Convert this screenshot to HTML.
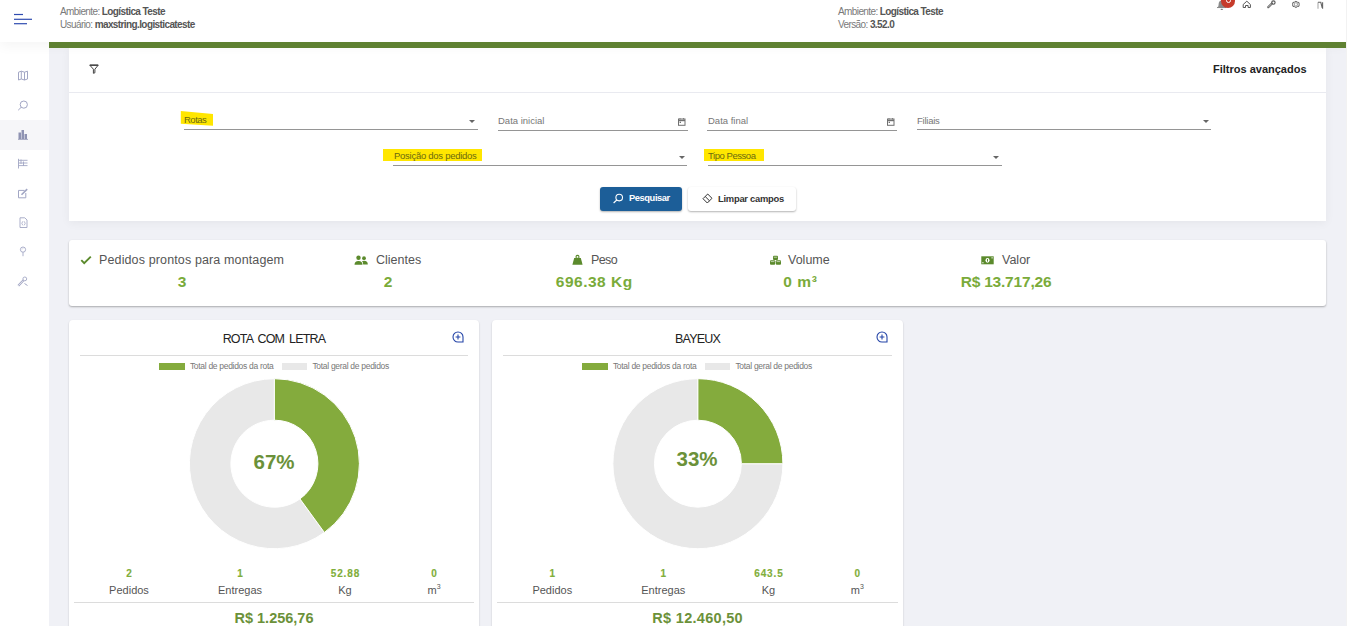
<!DOCTYPE html>
<html><head><meta charset="utf-8">
<style>
*{margin:0;padding:0;box-sizing:border-box}
html,body{width:1347px;height:626px;overflow:hidden;background:#f0f1f6;font-family:"Liberation Sans",sans-serif;position:relative}
.a{position:absolute}
#hdr{left:0;top:0;width:1346px;height:42px;background:#fff;z-index:2;box-shadow:0 4px 12px rgba(0,0,0,.045)}
#side{left:0;top:42px;width:49px;height:584px;background:#fff}
#green{left:49px;top:42px;width:1297px;height:6px;background:#5f8132;z-index:3}
.ht{font-size:10px;letter-spacing:-0.6px;color:#7a7a7a;white-space:nowrap;line-height:13px}
.ht b{color:#555;font-weight:bold}
.card{background:#fff;border-radius:3px}
.fl{font-size:9.5px;color:#777;white-space:nowrap}
.ul{height:1px;background:#959595}
.hl{background:#ffe600}
.arr{width:0;height:0;border-left:3px solid transparent;border-right:3px solid transparent;border-top:3px solid #666}
.sl{font-size:12.5px;color:#555;white-space:nowrap}
.sv{font-size:15.5px;color:#7aab3a;font-weight:bold;white-space:nowrap;text-align:center}
.g{color:#6b9139}
.ct{font-size:12.5px;letter-spacing:-0.8px;word-spacing:2.2px;color:#222;text-align:center;white-space:nowrap}
.lg{font-size:8.5px;letter-spacing:-0.3px;color:#777;white-space:nowrap}
.pc{font-size:20.5px;font-weight:bold;color:#6b9139;text-align:center}
.sn{font-size:10px;-webkit-text-stroke:0.15px #7fae3a;letter-spacing:0.9px;padding-left:0.9px;font-weight:bold;color:#7fae3a;text-align:center}
.sb{font-size:11px;color:#555;text-align:center}
.sb sup{font-size:7px;vertical-align:top;position:relative;top:-1px}
.tv{font-size:14.5px;font-weight:bold;color:#6b9139;text-align:center}
</style></head><body>
<!-- header -->
<div class="a" id="hdr">
<svg class="a" style="left:13px;top:13px" width="20" height="12"><g stroke="#2f4cb0" stroke-width="1.2"><line x1="1" y1="1.5" x2="10" y2="1.5"/><line x1="1" y1="6.3" x2="19" y2="6.3"/><line x1="1" y1="10.7" x2="14" y2="10.7"/></g></svg>
<div class="a ht" style="left:60px;top:5px">Ambiente: <b>Logística Teste</b><br>Usuário: <b>maxstring.logisticateste</b></div>
<div class="a ht" style="left:838px;top:5px">Ambiente: <b>Logística Teste</b><br>Versão: <b>3.52.0</b></div>

</div>
<div class="a" id="side"></div>
<div class="a" id="green"></div>
<!-- filter card -->
<div class="a card" style="left:69px;top:48px;width:1257px;height:173px;border-radius:0;box-shadow:0 2px 9px rgba(0,0,0,.05)"></div>
<div class="a" style="left:69px;top:92px;width:1257px;height:1px;background:#e9eaf0"></div>
<div class="a" style="left:1213px;top:63px;font-size:11px;font-weight:bold;color:#222;white-space:nowrap">Filtros avançados</div>

<!-- fields row 1 -->
<svg class="a hl2" style="left:180px;top:110px" width="35" height="18"><path d="M0.8 0.9L33 3.9V15.8L0.8 13.7Z" fill="#ffe600"/></svg>
<div class="a fl" style="left:184px;top:114px;color:#6b6a10;letter-spacing:-0.5px">Rotas</div>
<div class="a ul" style="left:184px;top:129px;width:294px"></div>
<div class="a arr" style="left:469px;top:120px"></div>

<div class="a fl" style="left:498px;top:115px">Data inicial</div>
<div class="a ul" style="left:498px;top:130px;width:190px"></div>

<div class="a fl" style="left:708px;top:115px">Data final</div>
<div class="a ul" style="left:707px;top:130px;width:190px"></div>

<div class="a fl" style="left:917px;top:115px;letter-spacing:-0.25px">Filiais</div>
<div class="a ul" style="left:917px;top:129px;width:294px"></div>
<div class="a arr" style="left:1203px;top:120px"></div>

<!-- fields row 2 -->
<div class="a hl" style="left:383px;top:149px;width:99px;height:12px"></div>
<div class="a fl" style="left:394px;top:150px;color:#6b6a10;letter-spacing:-0.27px">Posição dos pedidos</div>
<div class="a ul" style="left:393px;top:165px;width:294px"></div>
<div class="a arr" style="left:679px;top:156px"></div>

<div class="a hl" style="left:704px;top:149px;width:60px;height:12px"></div>
<div class="a fl" style="left:708px;top:150px;color:#6b6a10;letter-spacing:-0.45px">Tipo Pessoa</div>
<div class="a ul" style="left:708px;top:165px;width:294px"></div>
<div class="a arr" style="left:993px;top:156px"></div>

<!-- buttons -->
<div class="a" style="left:600px;top:187px;width:82px;height:24px;background:#1c5e98;border-radius:3px;box-shadow:0 1px 2px rgba(0,0,0,.3)"></div>
<div class="a" style="left:629px;top:193px;font-size:9.3px;letter-spacing:-0.4px;font-weight:bold;color:#fff;white-space:nowrap">Pesquisar</div>
<div class="a" style="left:688px;top:187px;width:108px;height:24px;background:#fff;border-radius:3px;box-shadow:0 1px 2px rgba(0,0,0,.3)"></div>
<div class="a" style="left:718px;top:193px;font-size:9.4px;letter-spacing:-0.25px;font-weight:bold;color:#333;white-space:nowrap">Limpar campos</div>

<!-- summary card -->
<div class="a card" style="left:69px;top:240px;width:1257px;height:66px;box-shadow:0 1px 2px rgba(0,0,0,.3)"></div>
<div class="a sl" style="left:99px;top:253px;letter-spacing:0.13px">Pedidos prontos para montagem</div>
<div class="a sv" style="left:132px;top:273px;width:100px">3</div>
<div class="a sl" style="left:376px;top:253px">Clientes</div>
<div class="a sv" style="left:338px;top:273px;width:100px">2</div>
<div class="a sl" style="left:591px;top:253px;letter-spacing:-0.6px">Peso</div>
<div class="a sv" style="left:544px;top:273px;width:100px;letter-spacing:0.5px;padding-left:0.5px">696.38 Kg</div>
<div class="a sl" style="left:788px;top:253px">Volume</div>
<div class="a sv" style="left:750px;top:273px;width:100px;letter-spacing:0.6px;padding-left:0.6px">0 m³</div>
<div class="a sl" style="left:1002px;top:253px">Valor</div>
<div class="a sv" style="left:956px;top:273px;width:100px;letter-spacing:-0.2px;padding-left:-0.2px">R$ 13.717,26</div>


<!-- header icons -->
<svg class="a" style="z-index:4;left:1215px;top:-1px" width="12" height="12" viewBox="0 0 12 12"><path d="M2.6 8.4 Q3.6 7.4 3.6 5.5 Q3.6 1.8 6.8 1.6 Q10 1.8 10 5.5 Q10 7.4 11 8.4 Z" fill="#8a8a8a"/><path d="M2 8.5H11.5" stroke="#8a8a8a" stroke-width="1.1"/><ellipse cx="6.8" cy="10.3" rx="1.3" ry="0.6" fill="#777"/></svg>
<div class="a" style="z-index:4;left:1221px;top:-6px;width:14px;height:14px;border-radius:50%;background:#c63b2b"></div>
<div class="a" style="z-index:4;left:1225.6px;top:-5px;width:5.2px;height:8px;border:1.5px solid #fff;border-radius:2.5px"></div>
<svg class="a" style="z-index:4;left:1242px;top:0px" width="10" height="10" viewBox="0 0 10 10"><path d="M1.2 7.5V4.5L4.8 1.2L8.4 4.5V7.5H6.1V5.5H3.5V7.5Z" fill="none" stroke="#555" stroke-width="1" stroke-linejoin="round"/></svg>
<svg class="a" style="z-index:4;left:1267px;top:0px" width="10" height="10" viewBox="0 0 10 10"><path d="M1.2 7.2L4.9 3.5" stroke="#555" stroke-width="2.1" stroke-linecap="round"/><path d="M1.2 7.2L4.9 3.5" stroke="#fff" stroke-width="0.7" stroke-linecap="round"/><circle cx="6.4" cy="2.6" r="1.7" fill="none" stroke="#555" stroke-width="1.1"/></svg>
<svg class="a" style="z-index:4;left:1291px;top:0px" width="10" height="10" viewBox="0 0 10 10"><path d="M4.9 1.3L6.4 2.2L7.9 2.5L8.2 4.4L7.9 6.3L6.4 6.6L4.9 7.5L3.4 6.6L1.9 6.3L1.6 4.4L1.9 2.5L3.4 2.2Z" fill="none" stroke="#555" stroke-width="0.95" stroke-linejoin="round"/><path d="M3.4 3.4L4.9 2.7L6.4 3.4V5.4L4.9 6.1L3.4 5.4Z" fill="none" stroke="#777" stroke-width="0.7"/></svg>
<svg class="a" style="z-index:4;left:1317px;top:1px" width="8" height="9" viewBox="0 0 8 9"><path d="M1 1.2V7.8" stroke="#aaa" stroke-width="1.1"/><path d="M1 1.3H3.8L5.2 6.8M5.6 1.2V7.8" fill="none" stroke="#666" stroke-width="1.1"/></svg>

<!-- sidebar icons -->
<svg class="a" style="left:17px;top:70px" width="12" height="11" viewBox="0 0 12 11"><path d="M1.5 2.2L4.3 1.2L7.5 2.2L10.5 1.2V9L7.5 10L4.3 9L1.5 10Z M4.3 1.2V9 M7.5 2.2V10" fill="none" stroke="#a2a6c4" stroke-width="1"/></svg>
<svg class="a" style="left:17px;top:100px" width="12" height="11" viewBox="0 0 12 11"><circle cx="6.8" cy="4.6" r="3.6" fill="none" stroke="#a2a6c4" stroke-width="1"/><path d="M4.2 7.3L1.2 10.2" stroke="#a2a6c4" stroke-width="1"/></svg>
<div class="a" style="left:0;top:120px;width:49px;height:30px;background:#f6f6f9"></div>
<svg class="a" style="left:17px;top:129px" width="12" height="11" viewBox="0 0 12 11"><path d="M1.5 3.5H4V10H1.5Z M4.5 1H7V10H4.5Z M7.5 5H10V10H7.5Z" fill="#8f93b3"/><path d="M1 10.4H11" stroke="#8f93b3" stroke-width="0.8"/></svg>
<svg class="a" style="left:17px;top:158px" width="12" height="11" viewBox="0 0 12 11"><path d="M1.5 0.8V10.5 M1.5 2.3H10.5 M1.5 5H10.5 M1.5 7.6H10.5 M4 1.5V6 M6.5 3.5V8" fill="none" stroke="#a2a6c4" stroke-width="0.9"/></svg>
<svg class="a" style="left:17px;top:188px" width="12" height="11" viewBox="0 0 12 11"><path d="M7.5 2.4H1.5V9.8H8.8V5" fill="none" stroke="#a2a6c4" stroke-width="1"/><path d="M4.5 6.8L10.2 1.1" stroke="#a2a6c4" stroke-width="1.6"/></svg>
<svg class="a" style="left:18px;top:217px" width="11" height="12" viewBox="0 0 11 12"><path d="M2 0.8H6.8L9 3V10.5H2Z" fill="none" stroke="#a2a6c4" stroke-width="0.9"/><path d="M4.8 4.3L3.8 6.3L4.8 8.3 M6.2 4.3L7.2 6.3L6.2 8.3" fill="none" stroke="#a2a6c4" stroke-width="0.8"/></svg>
<svg class="a" style="left:18px;top:246px" width="10" height="11" viewBox="0 0 10 11"><circle cx="5" cy="3.6" r="2.6" fill="none" stroke="#a2a6c4" stroke-width="0.9"/><path d="M5 6.2V10.2" stroke="#a2a6c4" stroke-width="0.9"/><path d="M4 3.4L5 2.4" stroke="#a2a6c4" stroke-width="0.7"/></svg>
<svg class="a" style="left:17px;top:276px" width="12" height="11" viewBox="0 0 12 11"><path d="M1.3 9.7L6.5 4.3" stroke="#a2a6c4" stroke-width="2.2"/><path d="M1.3 9.7L6.5 4.3" stroke="#fff" stroke-width="0.7"/><circle cx="7.8" cy="2.9" r="1.9" fill="none" stroke="#a2a6c4" stroke-width="0.9"/><path d="M7.5 7.5L10.5 9.5" stroke="#a2a6c4" stroke-width="1"/></svg>

<!-- filter icon -->
<svg class="a" style="left:89px;top:64px" width="10" height="10" viewBox="0 0 10 10"><path d="M0.8 1.2H9.2L5.9 5.2V8.8L4.4 9.3V5.2Z" fill="none" stroke="#444" stroke-width="1" stroke-linejoin="round"/><path d="M0.8 1.2H9.2" stroke="#444" stroke-width="1.4"/></svg>
<!-- calendars -->
<svg class="a" style="left:677px;top:117px" width="9" height="9" viewBox="0 0 9 9"><rect x="1.5" y="2" width="6.5" height="6.3" fill="none" stroke="#707070" stroke-width="1"/><path d="M1.5 3.5H8" stroke="#707070" stroke-width="1.4"/><path d="M3 1V2.5M6.5 1V2.5" stroke="#707070" stroke-width="0.8"/><rect x="2.6" y="4.7" width="1.4" height="1.3" fill="#707070"/></svg>
<svg class="a" style="left:886px;top:117px" width="9" height="9" viewBox="0 0 9 9"><rect x="1.5" y="2" width="6.5" height="6.3" fill="none" stroke="#707070" stroke-width="1"/><path d="M1.5 3.5H8" stroke="#707070" stroke-width="1.4"/><path d="M3 1V2.5M6.5 1V2.5" stroke="#707070" stroke-width="0.8"/><rect x="2.6" y="4.7" width="1.4" height="1.3" fill="#707070"/></svg>
<!-- button icons -->
<svg class="a" style="left:612px;top:193px" width="12" height="11" viewBox="0 0 12 11"><circle cx="7.2" cy="4.6" r="3.3" fill="none" stroke="#fff" stroke-width="1.1"/><path d="M4.8 7L1.6 10" stroke="#fff" stroke-width="1.1"/></svg>
<svg class="a" style="left:702px;top:193px" width="11" height="11" viewBox="0 0 11 11"><path d="M5.7 1L10 5.3L5.3 10L1 5.7Z" fill="none" stroke="#333" stroke-width="1"/><path d="M3.2 3.5L7.5 7.8" stroke="#333" stroke-width="1"/></svg>
<!-- summary icons -->
<svg class="a" style="left:80px;top:255px" width="12" height="10" viewBox="0 0 12 10"><path d="M1.3 5.2L4.2 8.2L10.8 1.6" fill="none" stroke="#5b8a2c" stroke-width="1.9"/></svg>
<svg class="a" style="left:354px;top:255px" width="15" height="11" viewBox="0 0 15 11"><circle cx="4.5" cy="2.8" r="2.2" fill="#5b8a2c"/><circle cx="10" cy="3.2" r="1.9" fill="#5b8a2c"/><path d="M0.5 9.8Q0.5 6 4.5 6Q8.5 6 8.5 9.8Z" fill="#5b8a2c"/><path d="M8 6.3Q9 5.8 10 5.8Q13.8 5.8 13.8 9.4H9.2Q9.2 7.4 8 6.3Z" fill="#5b8a2c"/></svg>
<svg class="a" style="left:571px;top:254px" width="13" height="12" viewBox="0 0 13 12"><path d="M3.2 4H9.8L11.6 10.8H1.4Z" fill="#5b8a2c"/><circle cx="6.5" cy="2.9" r="1.5" fill="none" stroke="#5b8a2c" stroke-width="1.1"/></svg>
<svg class="a" style="left:769px;top:255px" width="13" height="11" viewBox="0 0 13 11"><rect x="4" y="0.8" width="5" height="4.2" rx="1" fill="#5b8a2c"/><rect x="1" y="5.2" width="5.2" height="4.6" rx="1" fill="#5b8a2c"/><rect x="6.8" y="5.2" width="5.2" height="4.6" rx="1" fill="#5b8a2c"/><path d="M4.8 2.2H8.2M1.8 6.6H5.4M7.6 6.6H11.2" stroke="#fff" stroke-width="0.6"/></svg>
<svg class="a" style="left:981px;top:256px" width="13" height="9" viewBox="0 0 13 9"><rect x="0.3" y="0.3" width="12.4" height="8" fill="#5b8a2c"/><ellipse cx="6.5" cy="4.3" rx="2" ry="2.4" fill="#fff"/><rect x="6" y="3" width="1" height="2.6" fill="#5b8a2c"/><rect x="1.3" y="6.2" width="1.2" height="1.1" fill="#fff"/><rect x="10.5" y="1.3" width="1.2" height="1.1" fill="#fff"/></svg>


<!-- chart cards -->
<div class="a card" style="left:69px;top:320px;width:410px;height:320px;border-radius:4px;box-shadow:0 1px 2px rgba(0,0,0,.2)"></div>
<div class="a card" style="left:492px;top:320px;width:411px;height:320px;border-radius:4px;box-shadow:0 1px 2px rgba(0,0,0,.2)"></div>

<div class="a" style="left:80px;top:355px;width:388px;height:1px;background:#dcdcdc"></div>
<div class="a ct" style="left:69px;top:332px;width:410px">ROTA COM LETRA</div>
<svg class="a" style="left:452px;top:331px" width="12" height="12" viewBox="0 0 12 12"><path d="M1 6 A5 5 0 0 1 6 1 A5 5 0 0 1 11 6 L11 11 L6 11 A5 5 0 0 1 1 6 Z" fill="none" stroke="#2545a8" stroke-width="1.1"/><path d="M6 3.6V8.4M3.6 6H8.4" stroke="#2545a8" stroke-width="1.1"/></svg>
<div class="a" style="left:158.9px;top:363px;width:26px;height:7px;background:#84ab3d"></div>
<div class="a lg" style="left:189.9px;top:361px">Total de pedidos da rota</div>
<div class="a" style="left:282.2px;top:363px;width:25px;height:7px;background:#e8e8e8"></div>
<div class="a lg" style="left:312.4px;top:361px">Total geral de pedidos</div>
<svg class="a" style="left:187px;top:376px" width="174" height="174"><path d="M137.36 156.47 A85.00 85.00 0 1 1 87.40 2.70 L87.40 44.20 A43.50 43.50 0 1 0 112.97 122.89 Z" fill="#e8e8e8" stroke="#fff" stroke-width="1"/><path d="M87.40 2.70 A85.00 85.00 0 0 1 137.36 156.47 L112.97 122.89 A43.50 43.50 0 0 0 87.40 44.20 Z" fill="#84ab3d" stroke="#fff" stroke-width="1"/></svg>
<div class="a pc" style="left:224px;top:450px;width:100px">67%</div>
<div class="a sn" style="left:79.0px;top:568px;width:100px">2</div>
<div class="a sb" style="left:79.0px;top:584px;width:100px">Pedidos</div>
<div class="a sn" style="left:190.0px;top:568px;width:100px">1</div>
<div class="a sb" style="left:190.0px;top:584px;width:100px">Entregas</div>
<div class="a sn" style="left:295.0px;top:568px;width:100px">52.88</div>
<div class="a sb" style="left:295.0px;top:584px;width:100px">Kg</div>
<div class="a sn" style="left:384.0px;top:568px;width:100px">0</div>
<div class="a sb" style="left:384.0px;top:584px;width:100px">m<sup>3</sup></div>
<div class="a" style="left:74px;top:602px;width:400px;height:1px;background:#dcdcdc"></div>
<div class="a tv" style="left:69px;top:610px;width:410px">R$ 1.256,76</div>
<div class="a" style="left:503px;top:355px;width:389px;height:1px;background:#dcdcdc"></div>
<div class="a ct" style="left:492px;top:332px;width:411px">BAYEUX</div>
<svg class="a" style="left:876px;top:331px" width="12" height="12" viewBox="0 0 12 12"><path d="M1 6 A5 5 0 0 1 6 1 A5 5 0 0 1 11 6 L11 11 L6 11 A5 5 0 0 1 1 6 Z" fill="none" stroke="#2545a8" stroke-width="1.1"/><path d="M6 3.6V8.4M3.6 6H8.4" stroke="#2545a8" stroke-width="1.1"/></svg>
<div class="a" style="left:581.9px;top:363px;width:26px;height:7px;background:#84ab3d"></div>
<div class="a lg" style="left:612.9px;top:361px">Total de pedidos da rota</div>
<div class="a" style="left:705.2px;top:363px;width:25px;height:7px;background:#e8e8e8"></div>
<div class="a lg" style="left:735.4px;top:361px">Total geral de pedidos</div>
<svg class="a" style="left:610px;top:376px" width="174" height="174"><path d="M172.90 87.70 A85.00 85.00 0 1 1 87.90 2.70 L87.90 44.20 A43.50 43.50 0 1 0 131.40 87.70 Z" fill="#e8e8e8" stroke="#fff" stroke-width="1"/><path d="M87.90 2.70 A85.00 85.00 0 0 1 172.90 87.70 L131.40 87.70 A43.50 43.50 0 0 0 87.90 44.20 Z" fill="#84ab3d" stroke="#fff" stroke-width="1"/></svg>
<div class="a pc" style="left:647px;top:447px;width:100px">33%</div>
<div class="a sn" style="left:502.3px;top:568px;width:100px">1</div>
<div class="a sb" style="left:502.3px;top:584px;width:100px">Pedidos</div>
<div class="a sn" style="left:613.3px;top:568px;width:100px">1</div>
<div class="a sb" style="left:613.3px;top:584px;width:100px">Entregas</div>
<div class="a sn" style="left:718.5px;top:568px;width:100px">643.5</div>
<div class="a sb" style="left:718.5px;top:584px;width:100px">Kg</div>
<div class="a sn" style="left:807.3px;top:568px;width:100px">0</div>
<div class="a sb" style="left:807.3px;top:584px;width:100px">m<sup>3</sup></div>
<div class="a" style="left:497px;top:602px;width:401px;height:1px;background:#dcdcdc"></div>
<div class="a tv" style="left:492px;top:610px;width:411px;letter-spacing:0.3px;padding-left:0.3px">R$ 12.460,50</div>
<div class="a" style="left:1346px;top:0;width:1px;height:626px;background:#f2f2f2;z-index:5"></div>
</body></html>
